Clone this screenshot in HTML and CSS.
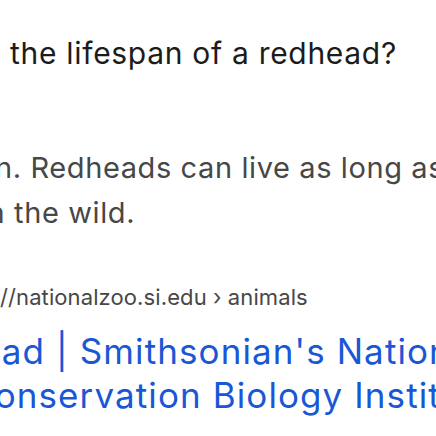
FILE: index.html
```html
<!DOCTYPE html>
<html lang="en">

<head>
    <meta charset="UTF-8">
    <meta name="viewport" content="width=device-width, initial-scale=1.0">
    <title>redhead lifespan</title>
    <link rel="stylesheet" href="styles.css">
</head>

<body>
    <main class="result">
        <h1 class="question">the lifespan of a redhead?</h1>

        <p class="snippet">
            <span class="line cut-n">n. Redheads can live as long as 21 years</span>
            <span class="line cut-i">in the wild.</span>
        </p>

        <div class="source">//nationalzoo.si.edu › animals</div>

        <h3 class="title">
            <span class="line cut-e">ead | Smithsonian's National Zoo and</span>
            <span class="line cut-c">Conservation Biology Institute</span>
        </h3>
    </main>
</body>

</html>
```

FILE: styles.css
```css
* {
    margin: 0;
    padding: 0;
    box-sizing: border-box;
}

html, body {
    width: 436px;
    height: 436px;
    overflow: hidden;
    background: #ffffff;
}

body {
    font-family: Inter, Roboto, Arial, sans-serif;
}

.result {
    display: flex;
    flex-direction: column;
    padding-left: 10px;
}

.line {
    display: block;
    white-space: nowrap;
}

/* people also ask heading */
.question {
    margin-top: 33px;
    font-size: 30px;
    font-weight: 400;
    line-height: 40px;
    letter-spacing: 0.7px;
    color: #1c1c1c;
    white-space: nowrap;
}

/* answer text */
.snippet {
    margin-top: 72px;
    margin-left: -10px;
    font-size: 29px;
    line-height: 45px;
    letter-spacing: 0.6px;
    color: #474747;
}

.cut-n {
    text-indent: -5px;
}

.cut-i {
    text-indent: -20px;
}

.source {
    margin-top: 48px;
    margin-left: -10px;
    font-size: 22px;
    line-height: 28px;
    letter-spacing: 0.1px;
    color: #474747;
    white-space: nowrap;
}

.title {
    margin-top: 18px;
    margin-left: -10px;
    font-size: 35px;
    font-weight: 400;
    line-height: 44px;
    letter-spacing: 1.1px;
    color: #1a57d6;
}

.cut-e {
    text-indent: -20px;
}

.cut-c {
    text-indent: -32px;
}
```
